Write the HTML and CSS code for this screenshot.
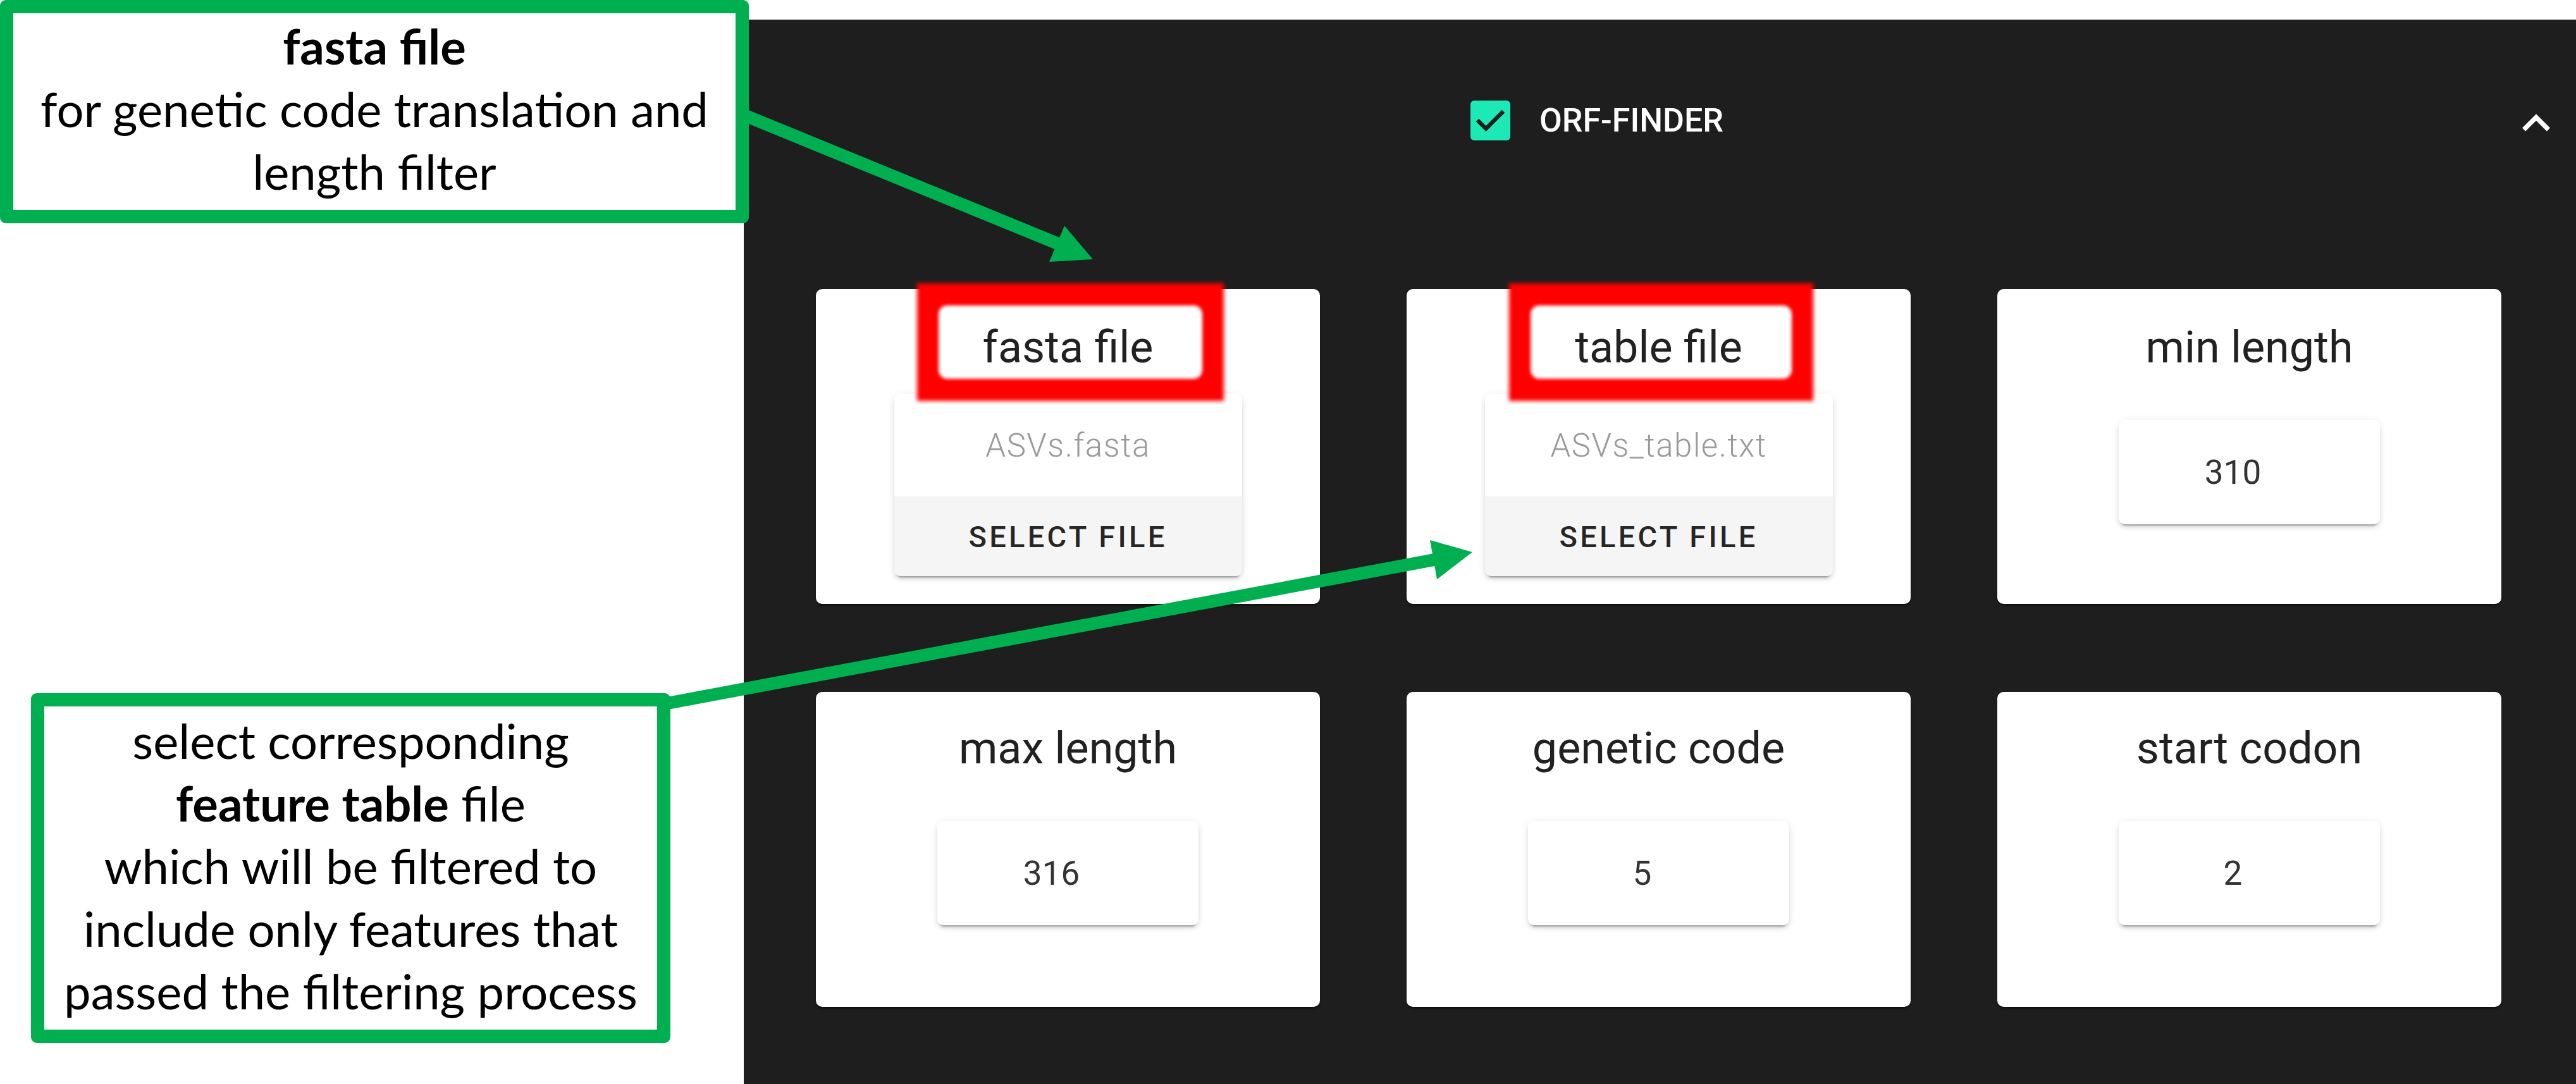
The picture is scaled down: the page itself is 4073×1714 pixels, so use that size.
FILE: index.html
```html
<!DOCTYPE html>
<html lang="en">
<head>
<meta charset="utf-8">
<title>ORF-FINDER</title>
<link rel="stylesheet" href="styles.css">
</head>
<body>
  <main class="panel">
    <header class="panel-head">
      <div class="head-title">
        <span class="checkbox">
          <svg viewBox="0 0 63 63" width="63" height="63"><polyline points="11,31 24.5,44.5 52,17" fill="none" stroke="#1e1e1e" stroke-width="6.5"/></svg>
        </span>
        <span class="head-label">ORF-FINDER</span>
      </div>
      <svg class="chevron" viewBox="0 0 24 24" width="88" height="88"><path d="M12 8l-6 6 1.41 1.41L12 10.83l4.59 4.58L18 14z" fill="#ffffff"/></svg>
    </header>

    <section class="grid">
      <div class="card card-file">
        <div class="card-title"><span class="hl">fasta file</span></div>
        <div class="file-widget">
          <div class="file-name">ASVs.fasta</div>
          <div class="file-btn">Select file</div>
        </div>
      </div>
      <div class="card card-file">
        <div class="card-title"><span class="hl">table file</span></div>
        <div class="file-widget">
          <div class="file-name">ASVs_table.txt</div>
          <div class="file-btn">Select file</div>
        </div>
      </div>
      <div class="card card-input">
        <div class="card-title"><span>min length</span></div>
        <div class="num-box">310</div>
      </div>
      <div class="card card-input row2">
        <div class="card-title"><span>max length</span></div>
        <div class="num-box">316</div>
      </div>
      <div class="card card-input row2">
        <div class="card-title"><span>genetic code</span></div>
        <div class="num-box">5</div>
      </div>
      <div class="card card-input row2">
        <div class="card-title"><span>start codon</span></div>
        <div class="num-box">2</div>
      </div>
    </section>
  </main>

  <div class="note note-top">
    <b>fasta file</b><br>
    for genetic code translation and<br>
    length filter
  </div>

  <div class="note note-bottom">
    select corresponding<br>
    <b>feature table</b> file<br>
    which will be filtered to<br>
    include only features that<br>
    passed the filtering process
  </div>

  <svg class="arrows" viewBox="0 0 4073 1714" width="4073" height="1714">
    <line x1="1174" y1="181" x2="1672" y2="385" stroke="#00b050" stroke-width="20"/>
    <polygon points="1683,357 1728,410 1659,414" fill="#00b050"/>
    <line x1="1050" y1="1113" x2="2268" y2="885" stroke="#00b050" stroke-width="20"/>
    <polygon points="2261,854 2328,873 2272,916" fill="#00b050"/>
  </svg>
</body>
</html>
```

FILE: styles.css
```css
html, body {
  margin: 0;
  padding: 0;
}

body {
  width: 4073px;
  height: 1714px;
  overflow: hidden;
  position: relative;
  background: #ffffff;
  font-family: Roboto, "Noto Sans", sans-serif;
}

.panel {
  margin: 31px 0 0 1176px;
  height: 1683px;
  background: #1e1e1e;
  box-sizing: border-box;
  overflow: visible;
}

.panel-head {
  height: 318px;
  display: flex;
  align-items: center;
  padding-right: 19px;
}

.head-title {
  flex: 1;
  display: flex;
  justify-content: center;
  align-items: center;
  gap: 46px;
}

.checkbox {
  width: 63px;
  height: 63px;
  border-radius: 6px;
  background: #1de9b6;
  display: block;
}

.checkbox svg {
  display: block;
}

.head-label {
  color: #ffffff;
  font-size: 52px;
  font-weight: 500;
  line-height: 63px;
}

.chevron {
  margin-left: 92px;
  margin-top: 10px;
  display: block;
}

.grid {
  margin-top: 108px;
  padding-left: 114px;
  display: grid;
  grid-template-columns: repeat(3, 797px);
  grid-auto-rows: 498px;
  column-gap: 137px;
  row-gap: 139px;
}

.card {
  background: #ffffff;
  border-radius: 10px;
  padding-top: 51px;
  box-sizing: border-box;
  display: flex;
  flex-direction: column;
  align-items: center;
  box-shadow: 0 5px 3px -3px rgba(0, 0, 0, 0.5), 0 2px 5px rgba(0, 0, 0, 0.2);
}

.card.row2 {
  padding-top: 48px;
}

.card-title {
  font-size: 70px;
  line-height: 82px;
  height: 82px;
  color: rgba(0, 0, 0, 0.87);
  white-space: nowrap;
}

.card-title span {
  display: inline-block;
}

.hl {
  position: relative;
  z-index: 1;
}

.hl::before {
  content: "";
  position: absolute;
  top: -60px;
  bottom: -44px;
  left: -104px;
  right: -112px;
  background: #ff0000;
  filter: blur(3px);
  z-index: -2;
}

.hl::after {
  content: "";
  position: absolute;
  top: -25px;
  bottom: -9px;
  left: -70px;
  right: -78px;
  background: #ffffff;
  border-radius: 14px;
  filter: blur(2.5px);
  z-index: -1;
}

.file-widget {
  margin-top: 33px;
  width: 550px;
  height: 288px;
  border-radius: 10px;
  overflow: hidden;
  display: flex;
  flex-direction: column;
  box-shadow: 0 7px 3px -5px rgba(0, 0, 0, 0.3), 0 5px 6px rgba(0, 0, 0, 0.1), 0 2px 14px rgba(0, 0, 0, 0.08);
}

.file-name {
  height: 162px;
  display: flex;
  align-items: center;
  justify-content: center;
  font-size: 51px;
  font-weight: 300;
  letter-spacing: 1.5px;
  color: #9a9a9a;
  background: #ffffff;
}

.file-btn {
  height: 126px;
  display: flex;
  align-items: center;
  justify-content: center;
  background: #f5f5f5;
  font-size: 47px;
  font-weight: 500;
  letter-spacing: 0.09em;
  text-transform: uppercase;
  color: rgba(0, 0, 0, 0.87);
}

.num-box {
  margin-top: 74px;
  width: 413px;
  height: 165px;
  box-sizing: border-box;
  padding-right: 52px;
  border-radius: 10px;
  display: flex;
  align-items: center;
  justify-content: center;
  font-size: 53px;
  color: rgba(0, 0, 0, 0.8);
  background: #ffffff;
  box-shadow: 0 7px 3px -5px rgba(0, 0, 0, 0.3), 0 5px 6px rgba(0, 0, 0, 0.1), 0 2px 14px rgba(0, 0, 0, 0.08);
}

.note {
  position: absolute;
  box-sizing: border-box;
  border: 21px solid #00b050;
  border-radius: 9px;
  background: #ffffff;
  font-family: Lato, "Open Sans", sans-serif;
  font-size: 76px;
  line-height: 99px;
  color: #000000;
  text-align: center;
  white-space: nowrap;
}

.note b {
  font-weight: 700;
}

.note-top {
  left: 0;
  top: 0;
  width: 1184px;
  height: 353px;
  padding-top: 2px;
}

.note-bottom {
  left: 49px;
  top: 1096px;
  width: 1011px;
  height: 553px;
  padding-top: 4px;
}

.arrows {
  position: absolute;
  left: 0;
  top: 0;
  pointer-events: none;
  z-index: 10;
}
```
